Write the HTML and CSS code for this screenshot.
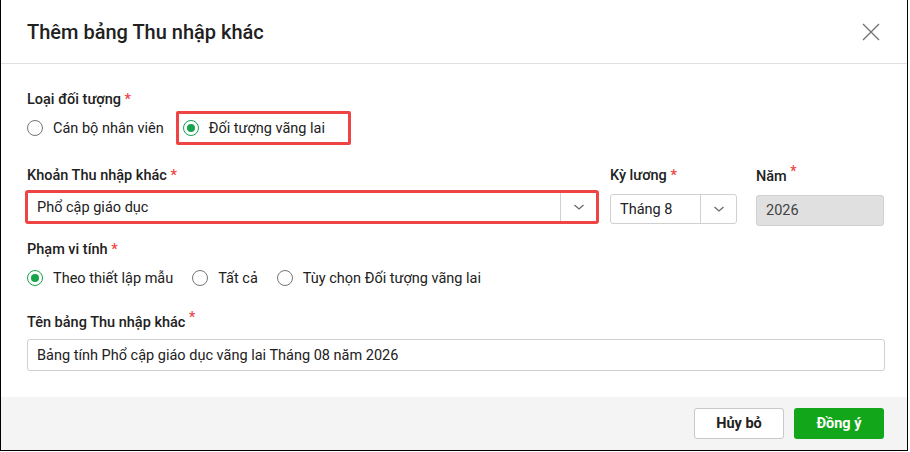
FILE: index.html
```html
<!DOCTYPE html>
<html lang="vi">
<head>
    <meta charset="UTF-8">
    <meta name="viewport" content="width=device-width, initial-scale=1.0">
    <title>Thêm bảng Thu nhập khác</title>
    <link rel="stylesheet" href="styles.css">
</head>
<body>
    <div class="dialog">
        <div class="dialog-header">
            <h1>Thêm bảng Thu nhập khác</h1>
            <button class="close-btn" type="button" aria-label="Đóng">
                <svg width="18" height="18" viewBox="0 0 18 18">
                    <path d="M1 1L17 17M17 1L1 17" stroke="#757575" stroke-width="1.4" fill="none"/>
                </svg>
            </button>
        </div>

        <div class="dialog-body">
            <div class="field">
                <label class="field-label">Loại đối tượng <span class="req">*</span></label>
                <div class="radio-group">
                    <label class="radio"><span class="dot"></span>Cán bộ nhân viên</label>
                    <label class="radio checked highlight"><span class="dot"></span>Đối tượng vãng lai</label>
                </div>
            </div>

            <div class="row">
                <div class="field col-main">
                    <label class="field-label">Khoản Thu nhập khác <span class="req">*</span></label>
                    <div class="highlight-box">
                        <div class="select">
                            <span class="select-value">Phổ cập giáo dục</span>
                            <span class="select-arrow">
                                <svg width="12" height="8" viewBox="0 0 12 8"><path d="M1.5 2L6 6L10.5 2" stroke="#666" stroke-width="1.2" fill="none"/></svg>
                            </span>
                        </div>
                    </div>
                </div>
                <div class="field col-period">
                    <label class="field-label">Kỳ lương <span class="req">*</span></label>
                    <div class="select">
                        <span class="select-value">Tháng 8</span>
                        <span class="select-arrow">
                            <svg width="12" height="8" viewBox="0 0 12 8"><path d="M1.5 2L6 6L10.5 2" stroke="#666" stroke-width="1.2" fill="none"/></svg>
                        </span>
                    </div>
                </div>
                <div class="field col-year">
                    <label class="field-label">Năm <sup class="req">*</sup></label>
                    <div class="input disabled">2026</div>
                </div>
            </div>

            <div class="field">
                <label class="field-label">Phạm vi tính <span class="req">*</span></label>
                <div class="radio-group">
                    <label class="radio checked"><span class="dot"></span>Theo thiết lập mẫu</label>
                    <label class="radio"><span class="dot"></span>Tất cả</label>
                    <label class="radio"><span class="dot"></span>Tùy chọn Đối tượng vãng lai</label>
                </div>
            </div>

            <div class="field field-name">
                <label class="field-label">Tên bảng Thu nhập khác <sup class="req">*</sup></label>
                <div class="input">Bảng tính Phổ cập giáo dục vãng lai Tháng 08 năm 2026</div>
            </div>
        </div>

        <div class="dialog-footer">
            <button class="btn btn-cancel" type="button">Hủy bỏ</button>
            <button class="btn btn-ok" type="button">Đồng ý</button>
        </div>
    </div>
</body>
</html>
```

FILE: styles.css
```css
body {
    margin: 0;
    padding: 0;
    font-family: Roboto, "Noto Sans", Arial, sans-serif;
    font-size: 14.5px;
    color: #212121;
    background: #fff;
}
.dialog {
    width: 906px;
    height: 450px;
    border-left: 1px solid #000;
    border-right: 1px solid #000;
    border-bottom: 1px solid #000;
    display: flex;
    flex-direction: column;
    background: #fff;
}
.dialog-header {
    height: 63px;
    border-bottom: 1px solid #e0e0e0;
    display: flex;
    align-items: center;
    justify-content: space-between;
    padding: 0 27px 0 26px;
}
.dialog-header h1 {
    margin: 0;
    font-size: 20px;
    font-weight: 500;
    color: #212121;
}
.close-btn {
    border: none;
    background: none;
    padding: 0;
    width: 18px;
    height: 18px;
    cursor: pointer;
}
.dialog-body {
    flex: 1;
    padding: 26px 22px 0 26px;
}
.field-label {
    display: block;
    font-weight: 500;
    line-height: 20px;
    margin-bottom: 8px;
}
.req {
    color: #ef4444;
}
sup.req {
    font-size: 14px;
    vertical-align: 0;
    position: relative;
    top: -5px;
}
.field {
    margin-bottom: 14px;
}
.radio-group {
    display: flex;
    align-items: center;
}
.radio {
    display: flex;
    align-items: center;
    height: 20px;
    margin-right: 19px;
    white-space: nowrap;
}
.radio .dot {
    width: 16px;
    height: 16px;
    box-sizing: border-box;
    border: 1px solid #757575;
    border-radius: 50%;
    margin-right: 10px;
    position: relative;
}
.radio.checked .dot {
    border-color: #16a34a;
}
.radio.checked .dot::after {
    content: "";
    position: absolute;
    left: 3px;
    top: 3px;
    width: 8px;
    height: 8px;
    border-radius: 50%;
    background: #16a34a;
}
.radio.highlight {
    border: 3px solid #ef4444;
    border-radius: 2px;
    height: 28px;
    padding: 0 23px 0 4px;
    margin-left: -7px;
    margin-top: -7px;
    margin-bottom: -7px;
}
.row {
    display: flex;
    align-items: flex-start;
    margin-top: 28px;
}
.col-main {
    width: 574px;
    margin-left: -2px;
}
.col-main .field-label {
    margin-left: 2px;
    margin-bottom: 6px;
}
.col-period {
    width: 127px;
    margin-left: 11px;
}
.col-year {
    width: 128px;
    margin-left: 19px;
}
.highlight-box {
    border: 3px solid #ef4444;
    border-radius: 3px;
    margin-top: -2px;
}
.select {
    display: flex;
    height: 28px;
    border: 1px solid #d0d0d0;
    border-radius: 3px;
    background: #fff;
    align-items: stretch;
}
.highlight-box .select {
    border: none;
}
.select-value {
    flex: 1;
    display: flex;
    align-items: center;
    padding-left: 9px;
}
.select-arrow {
    width: 35px;
    border-left: 1px solid #d0d0d0;
    display: flex;
    align-items: center;
    justify-content: center;
}
.input {
    box-sizing: border-box;
    height: 31px;
    border: 1px solid #d0d0d0;
    border-radius: 3px;
    display: flex;
    align-items: center;
    padding-left: 9px;
}
.input.disabled {
    background: #e0e0e0;
    color: #424242;
}
.field-name {
    margin-top: 24px;
}
.field-name .field-label {
    margin-bottom: 6px;
}
.field-name .input {
    height: 32px;
}
.dialog-footer {
    height: 53px;
    background: #f4f4f4;
    display: flex;
    justify-content: flex-end;
    align-items: center;
    gap: 10px;
    padding: 0 23px 0 0;
}
.btn {
    height: 31px;
    width: 90px;
    font-family: inherit;
    font-size: 14.5px;
    font-weight: 700;
    border-radius: 3px;
    cursor: pointer;
}
.btn-cancel {
    background: #fff;
    color: #212121;
    border: 1px solid #c8c8c8;
}
.btn-ok {
    background: #12a61b;
    color: #fff;
    border: none;
}
```
